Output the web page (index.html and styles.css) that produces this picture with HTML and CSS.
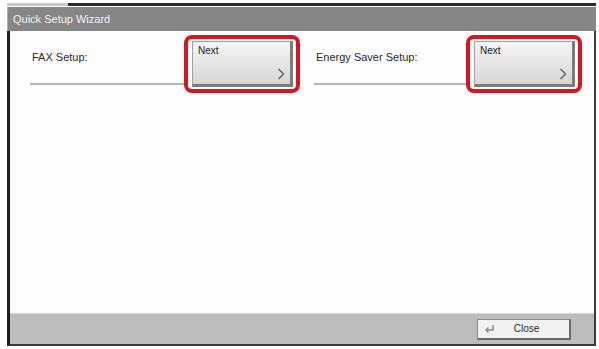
FILE: index.html
```html
<!DOCTYPE html>
<html lang="en">
<head>
    <meta charset="UTF-8">
    <title>Quick Setup Wizard</title>
    <link rel="stylesheet" href="styles.css">
</head>
<body>
    <div class="screen">
        <div class="top-edge">
            <span class="edge-light"></span>
            <span class="edge-dark"></span>
        </div>
        <div class="titlebar">Quick Setup Wizard</div>
        <div class="panel">
            <div class="content">
                <div class="item">
                    <div class="item-text">FAX Setup:</div>
                    <div class="highlight">
                        <button class="next-btn">
                            <span class="next-label">Next</span>
                            <svg class="chevron" width="8" height="12" viewBox="0 0 8 12">
                                <polyline points="1.5,1 6.5,6 1.5,11" fill="none" stroke="#6a6a6a" stroke-width="1.6"/>
                            </svg>
                        </button>
                    </div>
                </div>
                <div class="item">
                    <div class="item-text">Energy Saver Setup:</div>
                    <div class="highlight">
                        <button class="next-btn">
                            <span class="next-label">Next</span>
                            <svg class="chevron" width="8" height="12" viewBox="0 0 8 12">
                                <polyline points="1.5,1 6.5,6 1.5,11" fill="none" stroke="#6a6a6a" stroke-width="1.6"/>
                            </svg>
                        </button>
                    </div>
                </div>
            </div>
            <div class="footer">
                <button class="close-btn">
                    <svg class="return-icon" width="12" height="10" viewBox="0 0 12 10">
                        <polyline points="9,1 9,6 2,6" fill="none" stroke="#8a8a8a" stroke-width="1.5"/>
                        <polyline points="4.5,3.5 2,6 4.5,8.5" fill="none" stroke="#8a8a8a" stroke-width="1.5"/>
                    </svg>
                    <span class="close-label">Close</span>
                </button>
            </div>
        </div>
    </div>
</body>
</html>
```

FILE: styles.css
```css
body {
    margin: 0;
    background-color: #ffffff;
    font-family: 'Liberation Sans', Arial, sans-serif;
}

.screen {
    width: 589px;
    margin: 3px 0 0 7px;
}

.top-edge {
    display: flex;
    height: 3px;
}

.edge-light {
    width: 61px;
    background-color: #c8c8c8;
}

.edge-dark {
    flex: 1;
    background-color: #2a2a2a;
}

.titlebar {
    height: 24px;
    margin-top: 1px;
    padding-left: 5px;
    background-color: #868686;
    border-left: 1px solid #b0b0b0;
    color: #f4f4f4;
    font-size: 11px;
    line-height: 24px;
}

.panel {
    border-left: 3px solid #1c1c1c;
    border-right: 2px solid #3a3a3a;
    border-bottom: 2px solid #3a3a3a;
}

.content {
    display: flex;
    gap: 14px;
    height: 282px;
    padding: 4px 0 0 20px;
    box-sizing: border-box;
    background-color: #fdfdfd;
}

.item {
    display: flex;
    height: 58px;
}

.item:first-child {
    width: 270px;
}

.item:last-child {
    width: 268px;
}

.item-text {
    flex: 1;
    margin-bottom: 8px;
    padding: 16px 0 0 2px;
    border-bottom: 2px solid #b4b4b4;
    color: #2a2a2a;
    font-size: 11px;
}

.highlight {
    width: 116px;
    height: 58px;
    box-sizing: border-box;
    padding: 2px 3px 2px 4px;
    border: 4px solid #d6151d;
    border-radius: 8px;
}

.next-btn {
    position: relative;
    display: block;
    width: 100%;
    height: 100%;
    padding: 0;
    background: linear-gradient(#f6f6f6, #d6d6d6);
    border: 1px solid #a0a0a0;
    border-right: 3px solid #7c7c7c;
    border-bottom: 3px solid #7c7c7c;
    font-family: 'Liberation Sans', Arial, sans-serif;
    text-align: left;
}

.next-label {
    position: absolute;
    top: 3px;
    left: 5px;
    color: #1a1a1a;
    font-size: 10px;
}

.chevron {
    position: absolute;
    right: 5px;
    bottom: 4px;
}

.footer {
    display: flex;
    justify-content: flex-end;
    align-items: center;
    height: 30px;
    padding-right: 23px;
    background-color: #bdbdbd;
    border-top: 1px solid #d8d8d8;
}

.close-btn {
    display: flex;
    align-items: center;
    width: 94px;
    height: 21px;
    padding: 0 0 0 6px;
    background-color: #f2f2f2;
    border: 1px solid #8a8a8a;
    border-right: 2px solid #6a6a6a;
    border-bottom: 2px solid #6a6a6a;
    font-family: 'Liberation Sans', Arial, sans-serif;
}

.close-label {
    flex: 1;
    padding-right: 12px;
    color: #2a2a2a;
    font-size: 10px;
    text-align: center;
}
```
